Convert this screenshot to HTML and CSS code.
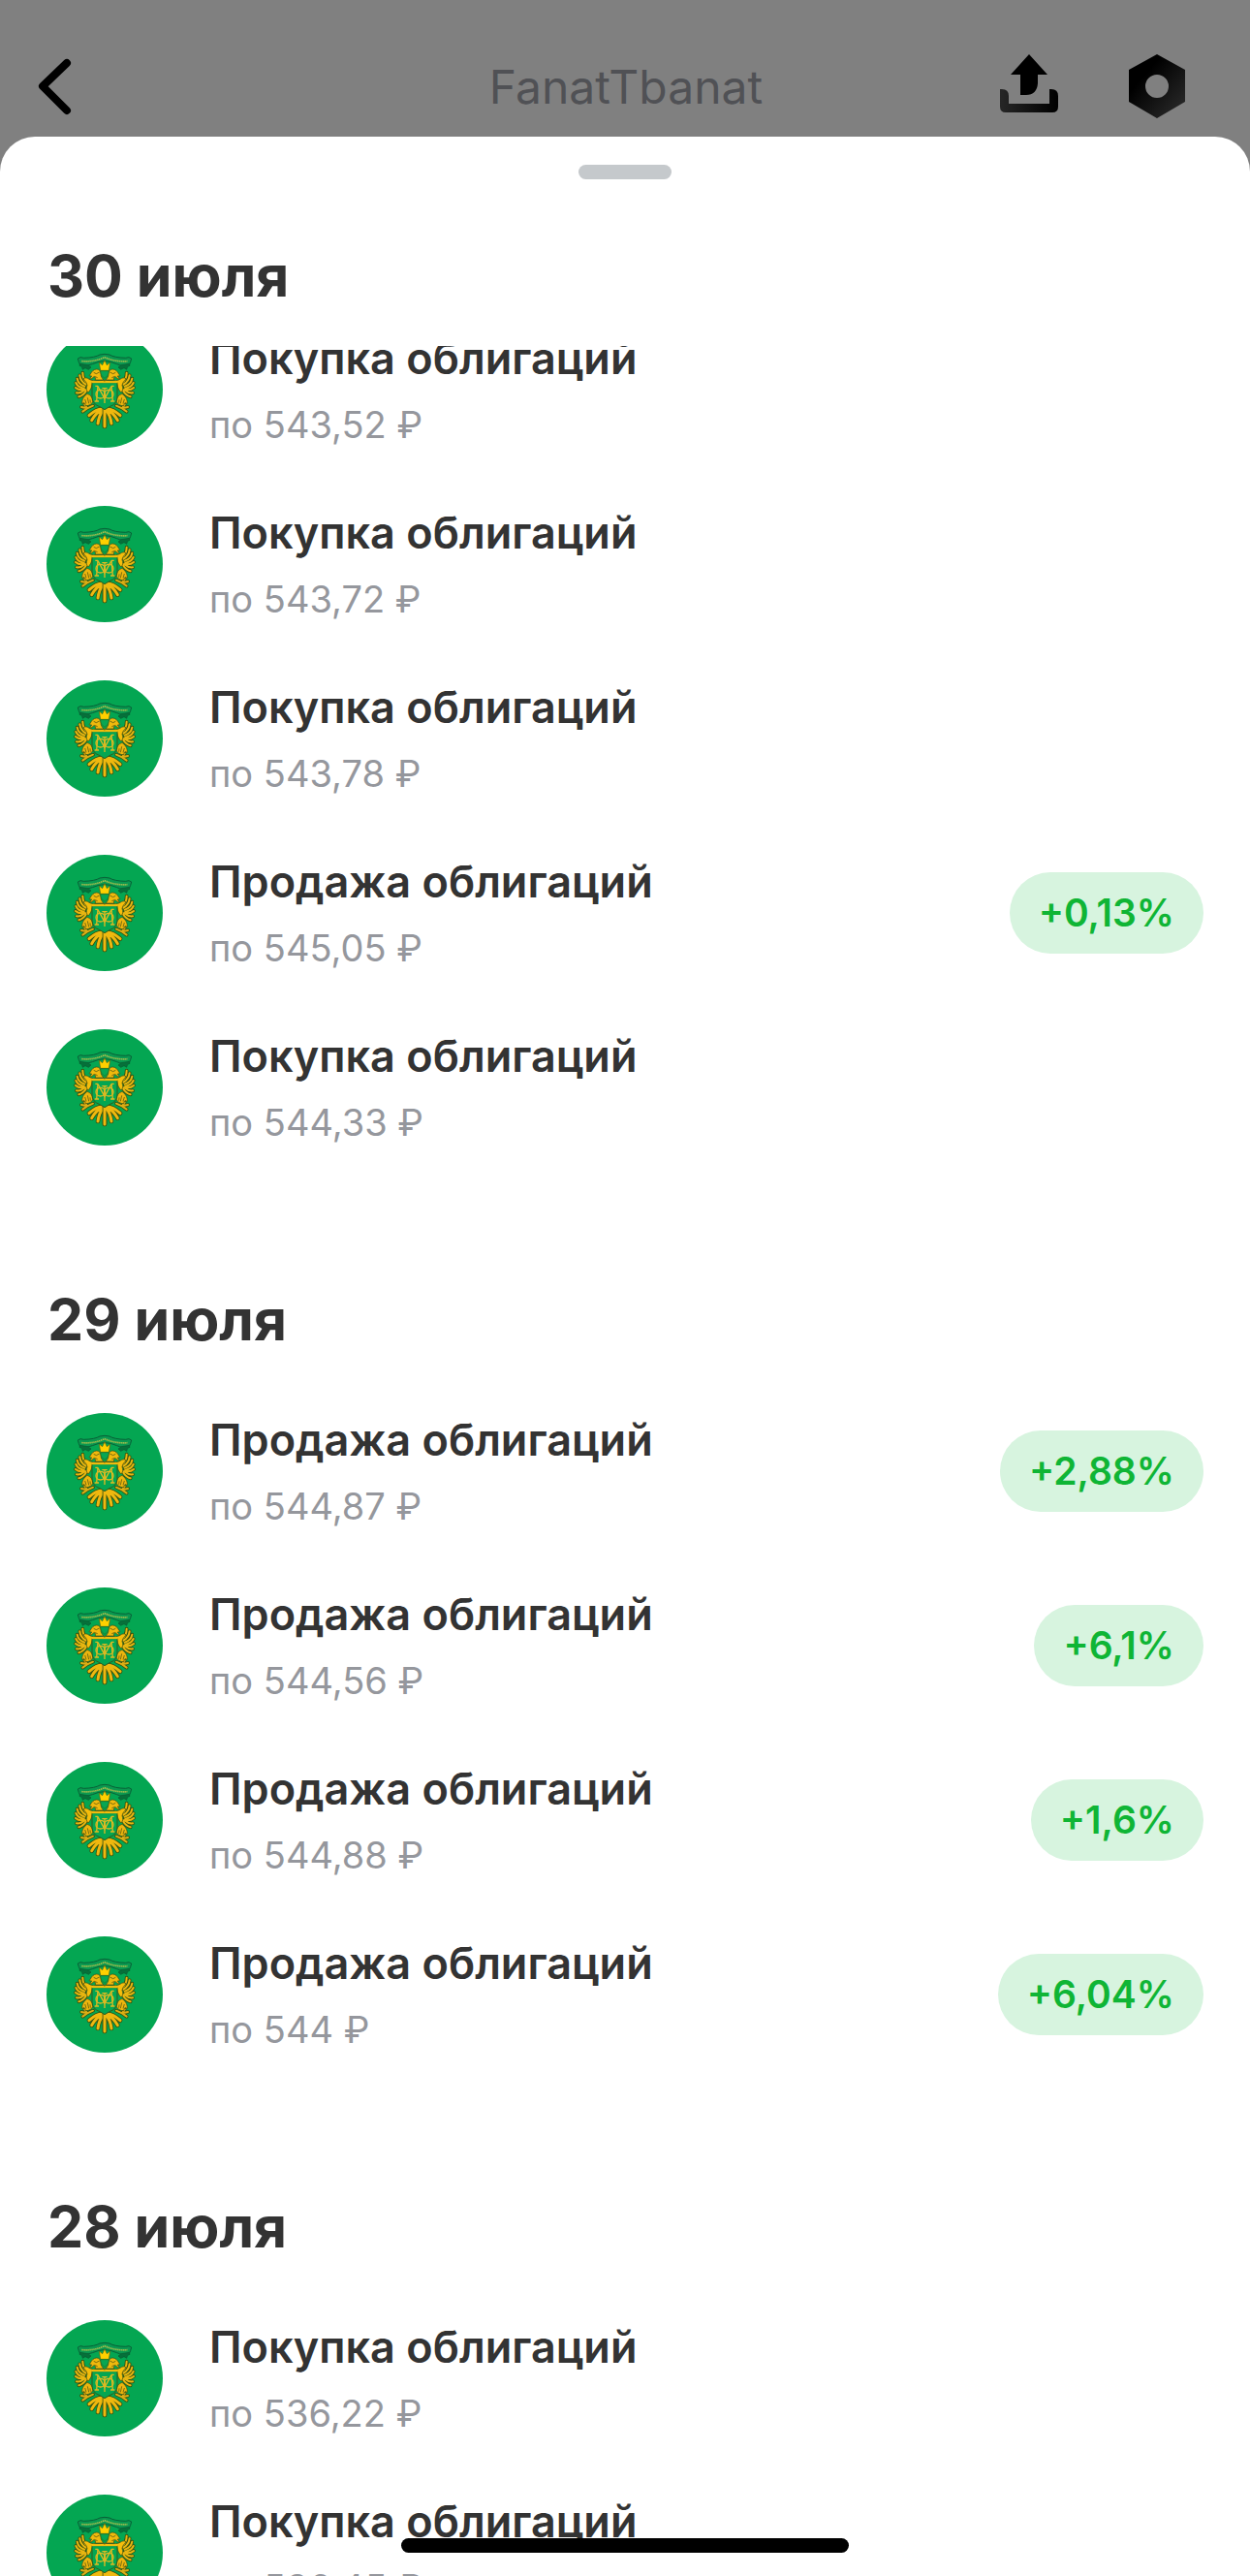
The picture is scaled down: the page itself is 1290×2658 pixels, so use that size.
FILE: index.html
```html
<!DOCTYPE html>
<html lang="ru">
<head>
<meta charset="utf-8">
<meta name="viewport" content="width=device-width, initial-scale=1">
<title>FanatTbanat</title>
<link rel="stylesheet" href="styles.css">
</head>
<body>
<svg class="defs" aria-hidden="true">
  <defs>
    <linearGradient id="tray-fill" x1="0" y1="0" x2="1" y2="0"><stop offset="0" stop-color="#262626"/><stop offset="1" stop-color="#000"/></linearGradient>
    <linearGradient id="nut-fill" x1="0" y1="0" x2="1" y2="1"><stop offset="0.3" stop-color="#000"/><stop offset="1" stop-color="#2e2e2e"/></linearGradient>
    <path id="feathers" d="M136 164Q136 184 150 194M127 172Q129 190 146 200M119 182Q122 200 142 206M115 195Q122 210 140 212M114 210Q124 219 140 216M117 226Q130 228 144 216M124 238Q138 234 148 218"/>
    <path id="tail" d="M196 276Q178 276 156 296M198 277Q176 288 164 311M201 277Q186 296 183 321M204 276V330"/>
    <path id="talon" d="M132 270L150 274L168 266M136 284L150 274L142 262"/>
    <g id="eagle-half" stroke-linejoin="round">
      <!-- ribbon tail -->
      <path d="M128 136l24 4 10 7-8 7-10-5-8 5-3-9-7-3z" fill="#06703a" stroke="#075c31" stroke-width="2"/>
      <!-- wing feathers -->
      <g fill="none" stroke-linecap="round">
        <use href="#feathers" stroke="#34510f" stroke-width="11"/>
        <use href="#feathers" stroke="#e8b611" stroke-width="6"/>
        <use href="#tail" stroke="#34510f" stroke-width="14"/>
        <use href="#tail" stroke="#efb80f" stroke-width="9"/>
        <use href="#talon" stroke="#34510f" stroke-width="11"/>
        <use href="#talon" stroke="#dcae14" stroke-width="6"/>
      </g>
      <g stroke="#3c4a10" stroke-width="2">
        <!-- shoulder and chest -->
        <path d="M138 182c6-4 12-3 18 2 8 5 18 4 27 4l21-1v12h-39c-1 12-5 18-12 26-6-7-7-14-3-22-1-10-8-14-12-21z" fill="#f5bd0c"/>
        <!-- head -->
        <path d="M160 168c4-8 10-15 19-15 10 0 13 8 13 15 0 8 4 12 8 18h-25c2-6 0-9-5-10-3 5-7 7-12 7l6-9-8-1z" fill="#f0b90d"/>
        <path d="M170 163l8 4 10-5M172 175l10 4" fill="none"/>
        <!-- leg -->
        <path d="M150 229c-8 6-17 15-16 31 7-6 11-2 10 6 11 1 21-5 24-14-1-11-8-20-18-23z" fill="#edb50e"/>
        <path d="M143 246l4 13M151 241l4 18M159 247l1 10" fill="none"/>
      </g>
    </g>
    <symbol id="emblem" viewBox="24 36 360 360">
      <circle cx="204" cy="216" r="180" fill="#04a652"/>
      <path d="M121 120q7-7 18-2 36-1 50-10 15-4 30 0 14 9 50 10 11-5 18 2-2 10-7 20-22 5-38-3-20-9-38-9-18 0-38 9-16 8-38 3-5-10-7-20z" fill="#0a9850" stroke="#086137" stroke-width="3"/>
      <path d="M133 128q38 3 71-12 33 15 71 12" fill="none" stroke="#b4c04c" stroke-width="5" stroke-dasharray="4 2"/>
      <use href="#eagle-half"/>
      <use href="#eagle-half" transform="matrix(-1 0 0 1 408 0)"/>
      <path d="M187 132l10 8 7-15 7 15 10-8-4 25h-26z" fill="#ffd000" stroke="#5c6210" stroke-width="2"/>
      <path d="M191 158h26q0 15-13 23-13-8-13-23z" fill="#07a653" stroke="#266e20" stroke-width="2"/>
      <!-- shield with monogram -->
      <path d="M165 194h78v46q0 20-24 29l-15 9-15-9q-24-9-24-29z" fill="#04a652" stroke="#325b1c" stroke-width="3"/>
      <path d="M164 193h80" stroke="#f2bd0d" stroke-width="5"/>
      <g fill="none" stroke="#dfba22">
        <path d="M175 205h8M183 205l-4 47M233 205h-8M225 205l4 47M173 252h13M222 252h13" stroke-width="4"/>
        <path d="M183 206l21 38 21-38" stroke-width="4"/>
        <path d="M204 212v46M196 212h16" stroke-width="4"/>
        <ellipse cx="191" cy="230" rx="14" ry="13" stroke-width="4"/>
        <ellipse cx="217" cy="230" rx="14" ry="13" stroke-width="4"/>
      </g>
    </symbol>
  </defs>
</svg>

<div class="screen">
  <header class="topbar">
    <button class="icon-button" type="button" aria-label="Назад">
      <svg width="60" height="68" viewBox="0 0 60 68"><path d="M39 10L14 34l25 25" fill="none" stroke="#000" stroke-width="8" stroke-linecap="round" stroke-linejoin="round"/></svg>
    </button>
    <h1 class="topbar-title">FanatTbanat</h1>
    <div class="topbar-actions">
      <button class="icon-button" type="button" aria-label="Поделиться">
        <svg width="60" height="68" viewBox="0 0 60 68"><path d="M30 1L49 22H39v9q-1 12-12 12h-6V22H11z"/><path d="M0 37h2q7 0 7 7v8h42V37h2q7 0 7 7v11q0 6-6 6H6q-6 0-6-6z" fill="url(#tray-fill)"/></svg>
      </button>
      <button class="icon-button" type="button" aria-label="Настройки">
        <svg width="60" height="68" viewBox="0 0 60 68"><path fill-rule="evenodd" d="M30 1L59 17V50L30 67 1 50V17zM30 22a12 12 0 1 0 0 24 12 12 0 0 0 0-24z" fill="url(#nut-fill)"/></svg>
      </button>
    </div>
  </header>

  <main class="sheet">
    <div class="handle"></div>
    <h2 class="day day-pinned">30 июля</h2>
    <div class="feed">
      <ul class="deals deals-scrolled">
        <li class="deal"><svg class="avatar"><use href="#emblem"/></svg><div class="info"><h3>Покупка облигаций</h3><p>по 543,52 ₽</p></div></li>
        <li class="deal"><svg class="avatar"><use href="#emblem"/></svg><div class="info"><h3>Покупка облигаций</h3><p>по 543,72 ₽</p></div></li>
        <li class="deal"><svg class="avatar"><use href="#emblem"/></svg><div class="info"><h3>Покупка облигаций</h3><p>по 543,78 ₽</p></div></li>
        <li class="deal"><svg class="avatar"><use href="#emblem"/></svg><div class="info"><h3>Продажа облигаций</h3><p>по 545,05 ₽</p></div><span class="profit">+0,13%</span></li>
        <li class="deal"><svg class="avatar"><use href="#emblem"/></svg><div class="info"><h3>Покупка облигаций</h3><p>по 544,33 ₽</p></div></li>
      </ul>
      <h2 class="day">29 июля</h2>
      <ul class="deals">
        <li class="deal"><svg class="avatar"><use href="#emblem"/></svg><div class="info"><h3>Продажа облигаций</h3><p>по 544,87 ₽</p></div><span class="profit">+2,88%</span></li>
        <li class="deal"><svg class="avatar"><use href="#emblem"/></svg><div class="info"><h3>Продажа облигаций</h3><p>по 544,56 ₽</p></div><span class="profit">+6,1%</span></li>
        <li class="deal"><svg class="avatar"><use href="#emblem"/></svg><div class="info"><h3>Продажа облигаций</h3><p>по 544,88 ₽</p></div><span class="profit">+1,6%</span></li>
        <li class="deal"><svg class="avatar"><use href="#emblem"/></svg><div class="info"><h3>Продажа облигаций</h3><p>по 544 ₽</p></div><span class="profit">+6,04%</span></li>
      </ul>
      <h2 class="day">28 июля</h2>
      <ul class="deals">
        <li class="deal"><svg class="avatar"><use href="#emblem"/></svg><div class="info"><h3>Покупка облигаций</h3><p>по 536,22 ₽</p></div></li>
        <li class="deal"><svg class="avatar"><use href="#emblem"/></svg><div class="info"><h3>Покупка облигаций</h3><p>по 536,45 ₽</p></div></li>
      </ul>
    </div>
  </main>
  <div class="home-indicator"></div>
</div>
</body>
</html>
```
FILE: styles.css
```css
* {
  box-sizing: border-box;
}

body {
  margin: 0;
  background: #808080;
  color: #333;
  font-family: Inter, "Liberation Sans", sans-serif;
}

h1, h2, h3, p, ul {
  margin: 0;
  padding: 0;
}

.defs {
  position: absolute;
  width: 0;
  height: 0;
}

.screen {
  position: relative;
  display: flex;
  flex-direction: column;
  height: 100vh;
  overflow: hidden;
}

/* Dimmed navigation bar behind the sheet */
.topbar {
  display: grid;
  grid-template-columns: 1fr auto 1fr;
  align-items: center;
  height: 141px;
  padding: 36px 66px 0 30px;
}

.icon-button {
  display: flex;
  justify-self: start;
  padding: 0;
  border: 0;
  background: none;
}

.topbar-title {
  padding: 2px 0 0 38px;
  color: #505155;
  font-size: 48px;
  font-weight: 400;
  line-height: 60px;
}

.topbar-actions {
  display: flex;
  justify-self: end;
  gap: 72px;
}

.sheet {
  display: flex;
  flex: 1;
  flex-direction: column;
  min-height: 0;
  padding-top: 29px;
  border-radius: 36px 36px 0 0;
  background: #fff;
}

.handle {
  align-self: center;
  width: 96px;
  height: 15px;
  border-radius: 8px;
  background: #c5c9cc;
}

.day {
  padding: 0 49px;
  font-size: 59px;
  font-weight: 700;
  line-height: 72px;
}

.day-pinned {
  padding-top: 64px;
  padding-bottom: 36px;
}

.feed {
  flex: 1;
  min-height: 0;
  overflow: hidden;
}

.feed .day {
  padding-top: 144px;
  padding-bottom: 60px;
}

.deals {
  display: flex;
  flex-direction: column;
  gap: 60px;
  padding: 0 48px;
  list-style: none;
}

.deals-scrolled {
  margin-top: -15px;
}

.deal {
  display: flex;
  align-items: center;
  gap: 48px;
}

.avatar {
  flex: none;
  width: 120px;
  height: 120px;
}

.info {
  flex: 1;
}

.info h3 {
  font-size: 45px;
  font-weight: 600;
  line-height: 56px;
}

.info p {
  padding-top: 16px;
  color: #95979d;
  font-size: 38px;
  line-height: 48px;
}

.profit {
  padding: 0 30px;
  border-radius: 42px;
  background: #d7f4df;
  color: #0fb535;
  font-size: 39px;
  font-weight: 600;
  line-height: 84px;
}

.home-indicator {
  position: absolute;
  bottom: 24px;
  left: 50%;
  width: 462px;
  height: 15px;
  border-radius: 8px;
  background: #000;
  transform: translateX(-50%);
}
```
